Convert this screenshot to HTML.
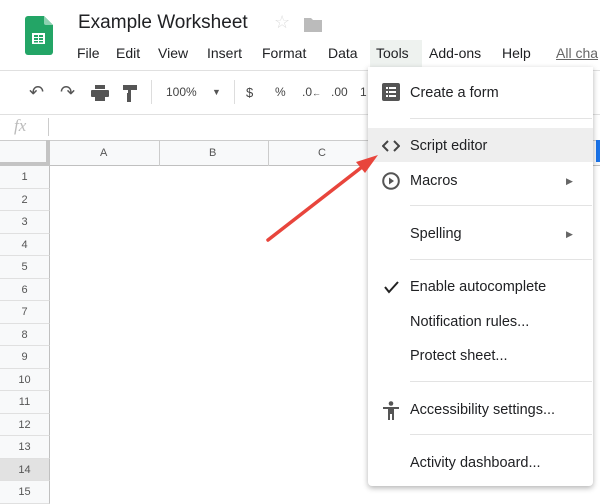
<!DOCTYPE html><html><head><style>
*{margin:0;padding:0;box-sizing:border-box}
body{width:600px;height:494px;overflow:hidden;background:#fff;font-family:"Liberation Sans",Arial,sans-serif;position:relative;color:#202124}
.a{position:absolute;white-space:nowrap}
.mb{font-size:14px;top:45px}
.tb{font-size:12px;color:#444;top:85px}
.rn{position:absolute;left:0;width:50px;height:22.5px;border-bottom:1px solid #e0e0e0;background:#f8f9fa;font-size:11px;color:#555;text-align:center;line-height:22px;border-right:1px solid #c0c0c0}
.mi{position:absolute;left:410px;font-size:14.5px;color:#202124}
.sep{position:absolute;left:410px;width:182px;height:1px;background:#e3e3e3}
</style></head><body>
<svg class="a" style="left:25px;top:16px" width="28" height="39" viewBox="0 0 28 39"><path d="M3 0H19L28 9V36a3 3 0 0 1-3 3H3a3 3 0 0 1-3-3V3a3 3 0 0 1 3-3z" fill="#23a566"/><path d="M19 0L28 9H21a2 2 0 0 1-2-2z" fill="#8ed1b1"/><rect x="7" y="17" width="13" height="11" fill="#fff"/><g fill="#23a566"><rect x="9" y="19" width="4" height="2"/><rect x="14" y="19" width="4" height="2"/><rect x="9" y="22" width="4" height="2"/><rect x="14" y="22" width="4" height="2"/><rect x="9" y="25" width="4" height="1.5"/><rect x="14" y="25" width="4" height="1.5"/></g></svg>
<div class="a" style="left:78px;top:12px;font-size:19px">Example Worksheet</div>
<div class="a" style="left:274px;top:12px;font-size:18px;color:#ddd">☆</div>
<svg class="a" style="left:304px;top:17px" width="18" height="15"><path d="M0 1h7l2 2h9v12H0z" fill="#bbb"/></svg>
<div class="a" style="left:370px;top:40px;width:52px;height:27px;background:#eef2ef"></div>
<div class="a mb" style="left:77px">File</div>
<div class="a mb" style="left:116px">Edit</div>
<div class="a mb" style="left:158px">View</div>
<div class="a mb" style="left:207px">Insert</div>
<div class="a mb" style="left:262px">Format</div>
<div class="a mb" style="left:328px">Data</div>
<div class="a mb" style="left:376px">Tools</div>
<div class="a mb" style="left:429px">Add-ons</div>
<div class="a mb" style="left:502px">Help</div>
<div class="a mb" style="left:556px;color:#666;text-decoration:underline">All cha</div>
<div class="a" style="left:0;top:70px;width:600px;height:1px;background:#e0e0e0"></div>
<div class="a" style="left:29px;top:82px;font-size:18px;color:#555">↶</div>
<div class="a" style="left:60px;top:82px;font-size:18px;color:#555">↷</div>
<svg class="a" style="left:91px;top:85px" width="18" height="16"><rect x="4" y="0" width="10" height="4" fill="#555"/><rect x="0" y="5" width="18" height="7" rx="1" fill="#555"/><rect x="4" y="10" width="10" height="6" fill="#555"/></svg>
<svg class="a" style="left:123px;top:85px" width="14" height="17"><rect x="0" y="0" width="14" height="5" fill="#555"/><rect x="5" y="5" width="3" height="3" fill="#555"/><rect x="4" y="8" width="4" height="9" fill="#555"/></svg>
<div class="a" style="left:151px;top:80px;width:1px;height:24px;background:#ddd"></div>
<div class="a tb" style="left:166px">100%</div>
<div class="a" style="left:212px;top:87px;font-size:9px;color:#555">▼</div>
<div class="a" style="left:234px;top:80px;width:1px;height:24px;background:#ddd"></div>
<div class="a tb" style="left:246px;font-size:13px">$</div>
<div class="a tb" style="left:275px">%</div>
<div class="a tb" style="left:302px">.0<span style="font-size:9px">←</span></div>
<div class="a tb" style="left:331px">.00</div>
<div class="a tb" style="left:360px">1</div>
<div class="a" style="left:0;top:114px;width:600px;height:1px;background:#e0e0e0"></div>
<div class="a" style="left:14px;top:116px;font-size:17px;font-style:italic;color:#bbb;font-family:'Liberation Serif',serif">fx</div>
<div class="a" style="left:48px;top:118px;width:1px;height:18px;background:#ccc"></div>
<div class="a" style="left:0;top:140px;width:600px;height:26px;background:#f8f9fa;border-top:1px solid #ccc;border-bottom:1px solid #c0c0c0"></div>
<div class="a" style="left:0;top:140px;width:50px;height:26px;border-right:4px solid #c4c4c4;border-bottom:4px solid #c4c4c4"></div>
<div class="a" style="left:159px;top:140px;width:1px;height:26px;background:#ccc"></div>
<div class="a" style="left:268px;top:140px;width:1px;height:26px;background:#ccc"></div>
<div class="a" style="left:377px;top:140px;width:1px;height:26px;background:#ccc"></div>
<div class="a" style="left:100px;top:147px;font-size:11px;color:#555">A</div>
<div class="a" style="left:209px;top:147px;font-size:11px;color:#555">B</div>
<div class="a" style="left:318px;top:147px;font-size:11px;color:#555">C</div>
<div class="a" style="left:596px;top:140px;width:4px;height:22px;background:#1a73e8"></div>
<div class="rn" style="top:166px">1</div><div class="rn" style="top:188.5px">2</div><div class="rn" style="top:211px">3</div><div class="rn" style="top:233.5px">4</div><div class="rn" style="top:256px">5</div><div class="rn" style="top:278.5px">6</div><div class="rn" style="top:301px">7</div><div class="rn" style="top:323.5px">8</div><div class="rn" style="top:346px">9</div><div class="rn" style="top:368.5px">10</div><div class="rn" style="top:391px">11</div><div class="rn" style="top:413.5px">12</div><div class="rn" style="top:436px">13</div><div class="rn" style="top:458.5px;background:#e2e2e2">14</div><div class="rn" style="top:481px">15</div>
<div class="a" style="left:368px;top:67px;width:225px;height:419px;background:#fff;box-shadow:0 2px 6px rgba(0,0,0,.3);border-radius:0 0 4px 4px"></div>
<div class="a" style="left:368px;top:128px;width:225px;height:34px;background:#eeeeee"></div>
<svg class="a" style="left:382px;top:83px" width="18" height="18"><rect width="18" height="18" rx="2" fill="#555"/><g fill="#fff"><rect x="4" y="4" width="2" height="2"/><rect x="7" y="4" width="7" height="2"/><rect x="4" y="8" width="2" height="2"/><rect x="7" y="8" width="7" height="2"/><rect x="4" y="12" width="2" height="2"/><rect x="7" y="12" width="7" height="2"/></g></svg>
<div class="mi" style="top:85px">Create a form</div>
<div class="sep" style="top:118px"></div>
<svg class="a" style="left:382px;top:140px" width="18" height="12"><path d="M6 1L1 6l5 5M12 1l5 5-5 5" stroke="#444" stroke-width="2" fill="none"/></svg>
<div class="mi" style="top:138px">Script editor</div>
<svg class="a" style="left:382px;top:172px" width="18" height="18"><circle cx="9" cy="9" r="7.8" stroke="#555" stroke-width="2" fill="none"/><path d="M7 5.5v7l5-3.5z" fill="#555"/></svg>
<div class="mi" style="top:173px">Macros</div>
<div class="a" style="left:566px;top:176px;font-size:9px;color:#666">▶</div>
<div class="sep" style="top:205px"></div>
<div class="mi" style="top:226px">Spelling</div>
<div class="a" style="left:566px;top:229px;font-size:9px;color:#666">▶</div>
<div class="sep" style="top:259px"></div>
<svg class="a" style="left:384px;top:280px" width="15" height="14"><path d="M1 7l4 5 9-10" stroke="#222" stroke-width="2" fill="none"/></svg>
<div class="mi" style="top:279px">Enable autocomplete</div>
<div class="mi" style="top:314px">Notification rules...</div>
<div class="mi" style="top:348px">Protect sheet...</div>
<div class="sep" style="top:381px"></div>
<svg class="a" style="left:383px;top:401px" width="16" height="19"><circle cx="8" cy="2.5" r="2.3" fill="#555"/><path d="M0 6h16v2h-5v11h-2v-6h-2v6H5V8H0z" fill="#555"/></svg>
<div class="mi" style="top:402px">Accessibility settings...</div>
<div class="sep" style="top:434px"></div>
<div class="mi" style="top:455px">Activity dashboard...</div>
<svg class="a" style="left:0;top:0" width="600" height="494"><line x1="268" y1="240" x2="362" y2="167" stroke="#e8453c" stroke-width="3.5" stroke-linecap="round"/><path d="M378 155L356 162l9 11z" fill="#e8453c"/></svg>
</body></html>
